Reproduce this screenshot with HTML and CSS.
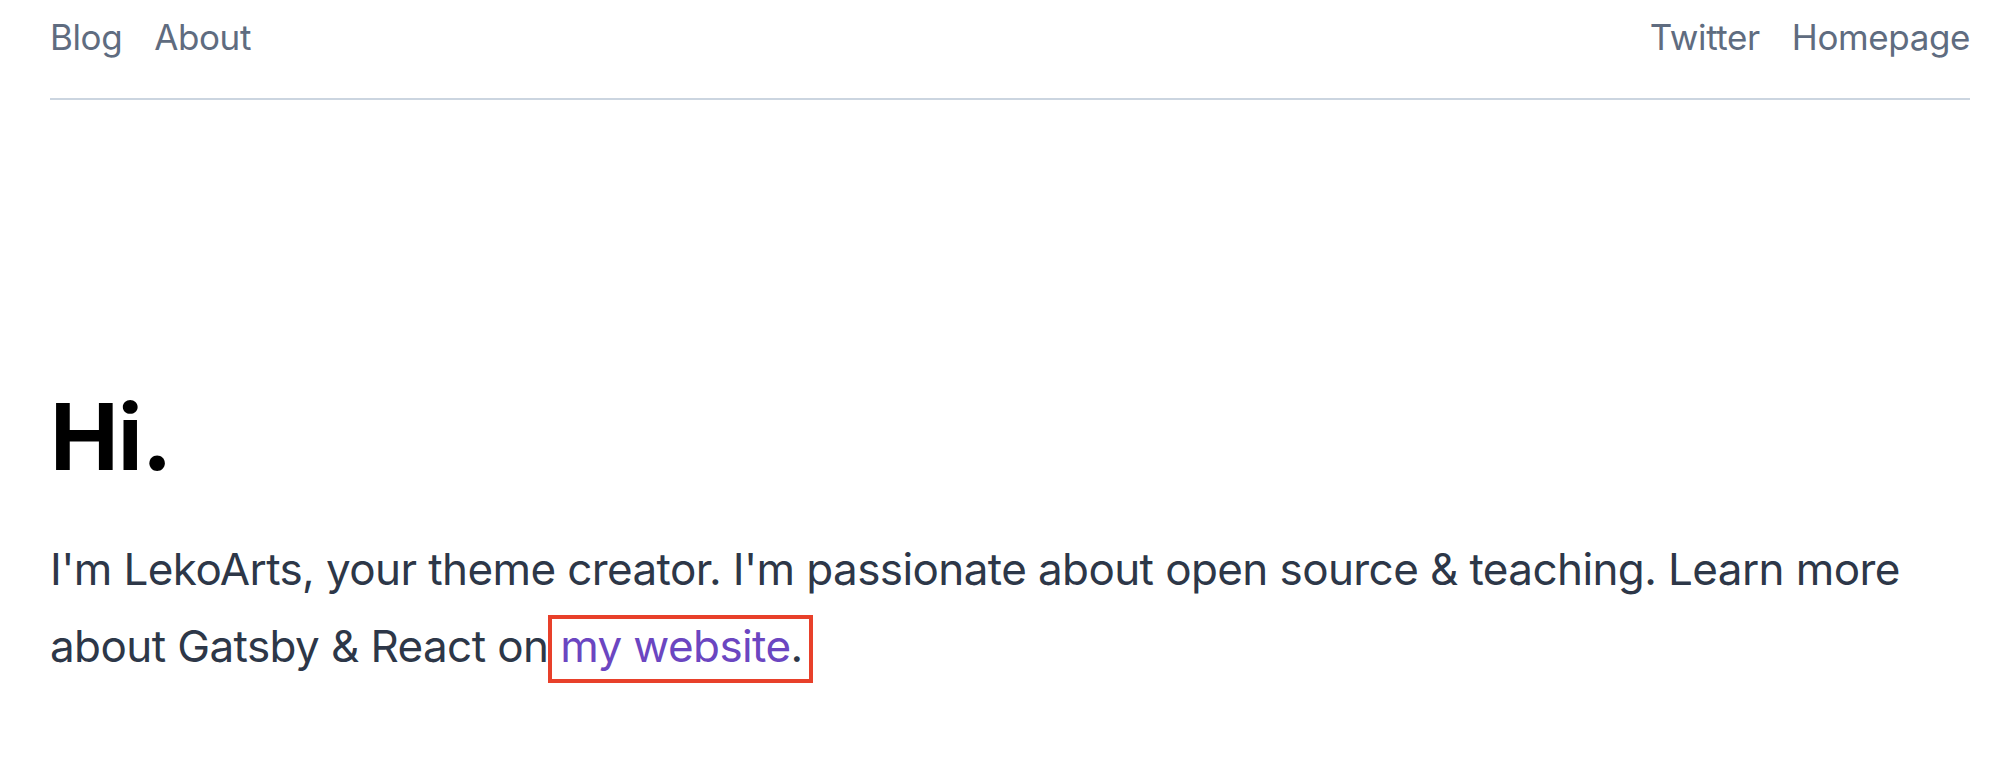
FILE: index.html
```html
<!DOCTYPE html>
<html lang="en">
<head>
<meta charset="utf-8">
<title>LekoArts</title>
<link rel="stylesheet" href="styles.css">
</head>
<body>
<div class="page">
  <header class="header">
    <nav class="nav nav-left">
      <a href="#" class="nav-link">Blog</a>
      <a href="#" class="nav-link">About</a>
    </nav>
    <nav class="nav nav-right">
      <a href="#" class="nav-link">Twitter</a>
      <a href="#" class="nav-link">Homepage</a>
    </nav>
  </header>
  <main class="main">
    <h1 class="title">Hi.</h1>
    <p class="intro">I'm LekoArts, your theme creator. I'm passionate about open source &amp; teaching. Learn more about Gatsby &amp; React on <a href="#" class="link">my website</a>.</p>
  </main>
</div>
</body>
</html>
```

FILE: styles.css
```css
* { box-sizing: border-box; }
html, body { margin: 0; padding: 0; background: #fff; }
body {
  font-family: Inter, "Noto Sans", "Liberation Sans", sans-serif;
  color: #2d3748;
}
.page {
  padding: 0 40px 0 50px;
}
.header {
  display: flex;
  justify-content: space-between;
  padding-top: 12px;
  padding-bottom: 36px;
  border-bottom: 2px solid #cbd5e0;
}
.nav {
  display: flex;
  gap: 32px;
}
.nav-link {
  font-size: 35px;
  line-height: 50px;
  letter-spacing: -0.4px;
  color: #5f6c80;
  text-decoration: none;
}
.main {
  padding-top: 291px;
}
.title {
  margin: 0;
  font-size: 92px;
  line-height: 92px;
  font-weight: 700;
  color: #000;
  letter-spacing: -1px;
}
.intro {
  margin: 48px 0 0;
  font-size: 44px;
  line-height: 77px;
  letter-spacing: -0.6px;
  max-width: 1900px;
}
.link {
  position: relative;
  color: #6b46c1;
  text-decoration: none;
}
.link::after {
  content: "";
  position: absolute;
  top: -4px;
  bottom: -10px;
  left: -12px;
  right: -23px;
  border: 4px solid #e8402a;
  pointer-events: none;
}
```
